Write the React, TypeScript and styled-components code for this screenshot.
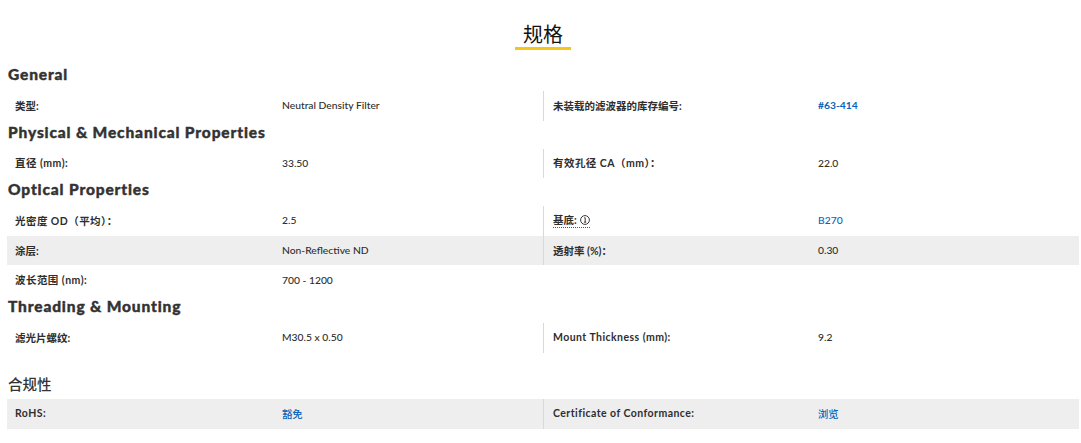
import styled, { createGlobalStyle } from "styled-components";

const GlobalStyle = createGlobalStyle`
  body {
    margin: 0;
    background: #fff;
    font-family: "Lato", "Noto Sans CJK SC", sans-serif;
    color: #2f2f2f;
  }
`;

type Cell = { text: string; link?: boolean; strong?: boolean; note?: boolean };
type SpecRow = { label: string; value: Cell; label2?: string; value2?: Cell; shaded?: boolean };

const general: SpecRow[] = [
  {
    label: "类型:",
    value: { text: "Neutral Density Filter" },
    label2: "未装载的滤波器的库存编号:",
    value2: { text: "#63-414", link: true, strong: true },
  },
];

const physical: SpecRow[] = [
  {
    label: "直径 (mm):",
    value: { text: "33.50" },
    label2: "有效孔径 CA（mm）：",
    value2: { text: "22.0" },
  },
];

const optical: SpecRow[] = [
  {
    label: "光密度 OD（平均）：",
    value: { text: "2.5" },
    label2: "基底:",
    value2: { text: "B270", link: true, note: true },
  },
  {
    label: "涂层:",
    value: { text: "Non-Reflective ND" },
    label2: "透射率 (%)：",
    value2: { text: "0.30" },
    shaded: true,
  },
  { label: "波长范围 (nm):", value: { text: "700 - 1200" } },
];

const threading: SpecRow[] = [
  {
    label: "滤光片螺纹:",
    value: { text: "M30.5 x 0.50" },
    label2: "Mount Thickness (mm):",
    value2: { text: "9.2" },
  },
];

const compliance: SpecRow[] = [
  {
    label: "RoHS:",
    value: { text: "豁免", link: true },
    label2: "Certificate of Conformance:",
    value2: { text: "浏览", link: true },
    shaded: true,
  },
];

const hasLatin = (text: string) => /[A-Za-z]/.test(text);

const Rows = ({ rows }: { rows: SpecRow[] }) => (
  <>
    {rows.map((row) => (
      <Row key={row.label} $shaded={row.shaded}>
        <Label $wide={hasLatin(row.label)}>{row.label}</Label>
        <Value $link={row.value.link}>{row.value.text}</Value>
        {row.label2 && row.value2 ? (
          <>
            <Label $divided $wide={hasLatin(row.label2)}>
              {row.value2.note ? (
                <Dotted>
                  {row.label2}
                  <InfoIcon />
                </Dotted>
              ) : (
                row.label2
              )}
            </Label>
            <Value $link={row.value2.link} $strong={row.value2.strong}>
              {row.value2.text}
            </Value>
          </>
        ) : null}
      </Row>
    ))}
  </>
);

const InfoIcon = () => (
  <svg width="10" height="10" viewBox="0 0 10 10" fill="none" stroke="#222" strokeWidth="0.9">
    <circle cx="5" cy="5" r="4.4" />
    <path d="M4.2 2.8h1v4.2M3.9 7.2h2.3" />
  </svg>
);

export default function App() {
  return (
    <Page>
      <GlobalStyle />
      <TitleWrap>
        <Title>规格</Title>
      </TitleWrap>
      <Section>General</Section>
      <Rows rows={general} />
      <Section>Physical &amp; Mechanical Properties</Section>
      <Rows rows={physical} />
      <Section>Optical Properties</Section>
      <Rows rows={optical} />
      <Section>Threading &amp; Mounting</Section>
      <Rows rows={threading} />
      <Compliance>合规性</Compliance>
      <Rows rows={compliance} />
    </Page>
  );
}

const Page = styled.div`
  width: 1072px;
  height: 443px;
  padding-left: 7px;
  overflow: hidden;
`;

const TitleWrap = styled.div`
  display: flex;
  justify-content: center;
  padding-top: 20px;
  margin-bottom: 13px;
`;

const Title = styled.h2`
  margin: 0;
  padding: 0 8px;
  height: 27px;
  line-height: 29px;
  font-size: 20px;
  font-weight: 400;
  color: #111;
  border-bottom: 3px solid #f5c518;
`;

const Section = styled.h3`
  margin: 0;
  padding-left: 1px;
  height: 28px;
  line-height: 22px;
  font-size: 15.5px;
  font-weight: 900;
  letter-spacing: 0.85px;
  color: #333;
  -webkit-text-stroke: 0.4px #333;
`;

const Compliance = styled.h3`
  margin: 25.4px 0 7px;
  padding-left: 1px;
  height: 14px;
  line-height: 14px;
  font-size: 14.5px;
  font-weight: 500;
  color: #333;
`;

const Row = styled.div<{ $shaded?: boolean }>`
  display: grid;
  grid-template-columns: 267px 269px 267px 269px;
  height: 29.6px;
  align-items: stretch;
  background: ${(p) => (p.$shaded ? "#eeeeee" : "transparent")};
`;

const Label = styled.div<{ $divided?: boolean; $wide?: boolean }>`
  display: flex;
  align-items: center;
  padding: ${(p) => (p.$divided ? "0 0 1px 9px" : "0 0 1px 8px")};
  font-size: 10.5px;
  font-weight: 700;
  letter-spacing: ${(p) => (p.$wide ? "0.45px" : "0")};
  color: #2e2e2e;
  border-left: ${(p) => (p.$divided ? "1px solid #d9d9d9" : "0")};
`;

const Dotted = styled.span`
  display: inline-flex;
  align-items: center;
  gap: 3px;
  border-bottom: 1px dotted #555;
`;

const Value = styled.div<{ $link?: boolean; $strong?: boolean }>`
  display: flex;
  align-items: center;
  padding: 0 0 1px 8px;
  font-size: 10.3px;
  font-weight: ${(p) => (p.$strong ? 700 : 500)};
  color: ${(p) => (p.$link ? "#0a64b8" : "#2e2e2e")};
`;
